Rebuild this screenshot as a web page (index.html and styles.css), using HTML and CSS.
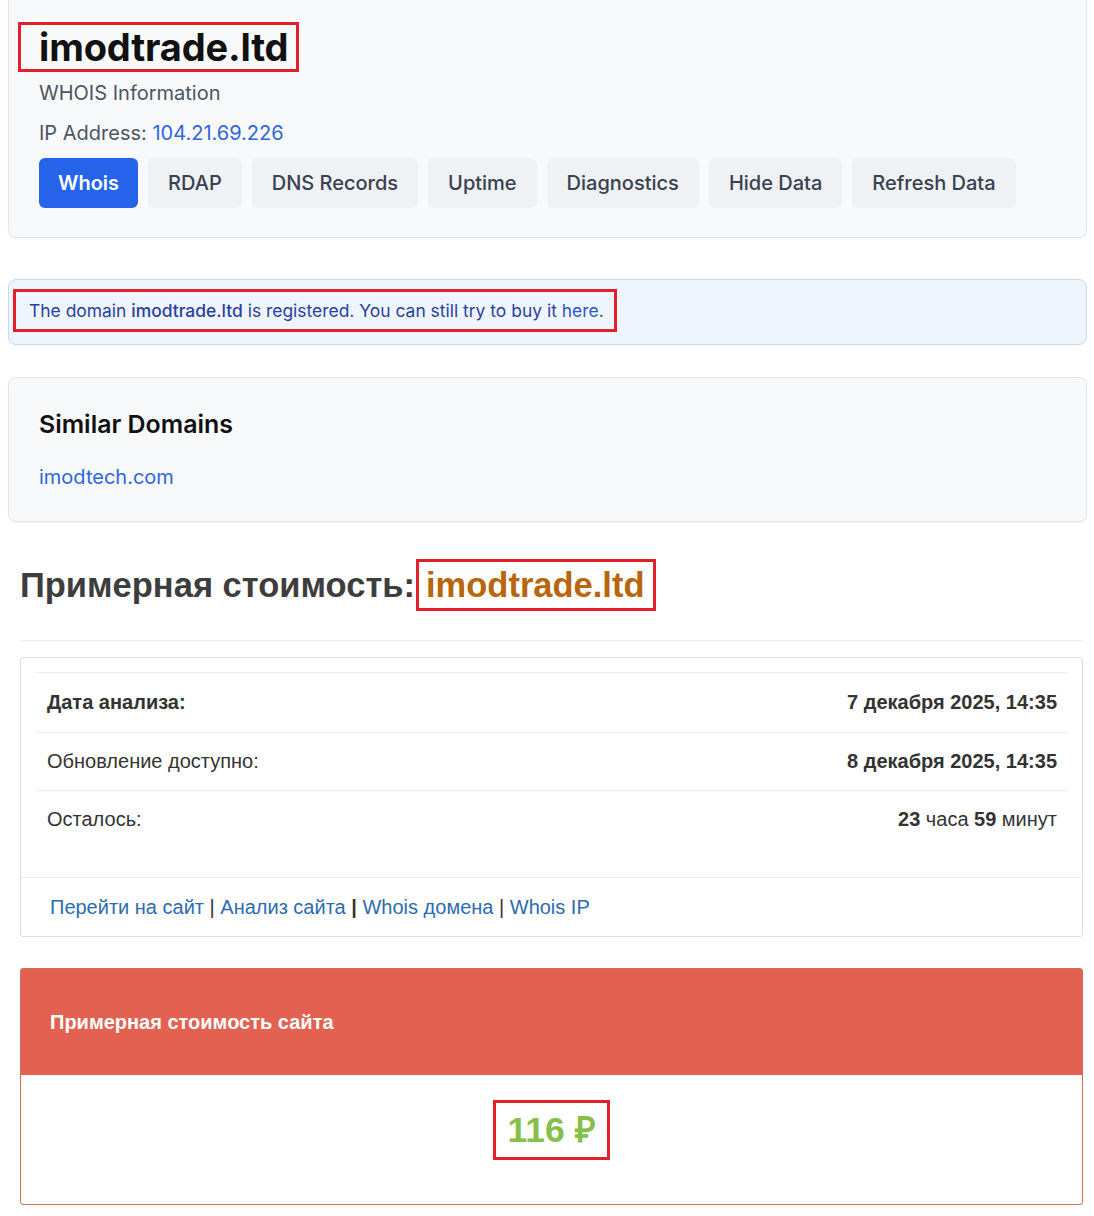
FILE: index.html
```html
<!DOCTYPE html>
<html lang="ru">
<head>
<meta charset="utf-8">
<title>imodtrade.ltd</title>
<link rel="stylesheet" href="styles.css">
</head>
<body>
<div class="page">
  <section class="card head-card">
    <h1 class="domain-title"><span class="mark mark-title">imodtrade.ltd</span></h1>
    <p class="sub">WHOIS Information</p>
    <p class="ip">IP Address: <a href="#" class="link">104.21.69.226</a></p>
    <nav class="tabs">
      <a href="#" class="tab active">Whois</a>
      <a href="#" class="tab">RDAP</a>
      <a href="#" class="tab">DNS Records</a>
      <a href="#" class="tab">Uptime</a>
      <a href="#" class="tab">Diagnostics</a>
      <a href="#" class="tab">Hide Data</a>
      <a href="#" class="tab">Refresh Data</a>
    </nav>
  </section>

  <div class="alert">
    <span class="mark mark-alert">The domain <strong>imodtrade.ltd</strong> is registered. You can still try to buy it <a href="#" class="alert-link">here</a>.</span>
  </div>

  <section class="card similar">
    <h2 class="similar-title">Similar Domains</h2>
    <a href="#" class="link similar-link">imodtech.com</a>
  </section>

  <div class="lower">
    <h2 class="cost-title">Примерная стоимость:<span class="mark mark-cost">imodtrade.ltd</span></h2>
    <hr class="sep">

    <div class="panel">
      <div class="panel-body">
        <table class="info">
          <tr><td class="b">Дата анализа:</td><td class="r b">7 декабря 2025, 14:35</td></tr>
          <tr><td>Обновление доступно:</td><td class="r b">8 декабря 2025, 14:35</td></tr>
          <tr><td>Осталось:</td><td class="r"><b>23</b> часа <b>59</b> минут</td></tr>
        </table>
      </div>
      <div class="panel-footer">
        <a href="#">Перейти на сайт</a> | <a href="#">Анализ сайта</a> <b>|</b> <a href="#">Whois домена</a> | <a href="#">Whois IP</a>
      </div>
    </div>

    <div class="price-panel">
      <div class="price-head">Примерная стоимость сайта</div>
      <div class="price-body"><span class="mark mark-price">116 ₽</span></div>
    </div>
  </div>
</div>
</body>
</html>
```

FILE: styles.css
```css
html, body {
  margin: 0;
  padding: 0;
  background: #ffffff;
}
body {
  font-family: Inter, "Noto Sans", sans-serif;
  color: #111827;
}
.page {
  padding: 0 7px 0 8px;
}
.card {
  background: #f8f9fb;
  border: 1px solid #e3e5e9;
  border-radius: 8px;
  box-shadow: 0 1px 2px rgba(0,0,0,0.04);
}
.head-card {
  margin-top: -8px;
  padding: 29px 30px 29px 30px;
}
.mark {
  border: 3px solid #e2202b;
  display: inline-block;
}
.domain-title {
  margin: 0;
  font-size: 38px;
  font-weight: 700;
  line-height: 44px;
  color: #111111;
  letter-spacing: -0.15px;
}
.mark-title {
  margin-left: -21px;
  padding: 0 8px 0 18px;
}
.sub {
  margin: 7px 0 0 0;
  font-size: 20px;
  line-height: 28px;
  color: #4b5563;
}
.ip {
  margin: 12px 0 0 0;
  font-size: 20px;
  line-height: 28px;
  color: #4b5563;
}
.link {
  color: #2f66d9;
  text-decoration: none;
}
.tabs {
  display: flex;
  gap: 10px;
  margin-top: 11px;
}
.tab {
  display: block;
  height: 50px;
  line-height: 50px;
  padding: 0 20px;
  border-radius: 6px;
  background: #f0f1f4;
  color: #374151;
  font-size: 20px;
  font-weight: 500;
  text-decoration: none;
}
.tab.active {
  background: #2563eb;
  color: #ffffff;
  font-weight: 600;
  padding: 0 19px;
}
.alert {
  margin-top: 41px;
  background: #eef5ff;
  border: 1px solid #c3daf5;
  border-radius: 8px;
  padding: 9px 4px 12px 4px;
}
.mark-alert {
  padding: 0 10px 0 13px;
  line-height: 37px;
  font-size: 17.45px;
  color: #2b3f9e;
}
.mark-alert strong {
  font-weight: 500;
}
.alert-link {
  color: #2b55c4;
  text-decoration: none;
}
.similar {
  margin-top: 32px;
  padding: 30px 30px 30px 30px;
}
.similar-title {
  margin: 0;
  font-size: 24.9px;
  line-height: 32px;
  font-weight: 600;
  color: #111111;
}
.similar-link {
  display: block;
  margin-top: 23px;
  font-size: 20px;
  line-height: 28px;
}
.lower {
  margin: 0 4px 0 12px;
  font-family: "Liberation Sans", Arial, sans-serif;
  color: #333333;
}
.cost-title {
  margin: 37px 0 0 0;
  font-size: 34.5px;
  line-height: 46px;
  font-weight: 700;
  color: #3d3d3d;
}
.mark-cost {
  color: #b8650c;
  padding: 0 8px 0 7px;
  margin-left: 1px;
}
.sep {
  margin: 29px 0 16px 0;
  border: 0;
  border-top: 1px solid #eeeeee;
}
.panel {
  border: 1px solid #dddddd;
  border-radius: 3px;
  background: #ffffff;
}
.panel-body {
  padding: 14px 14px 29px 14px;
}
.info {
  width: 100%;
  border-collapse: collapse;
  font-size: 20px;
}
.info td {
  border-top: 1px solid #eeeeee;
  padding: 0 11px 0 12px;
  height: 57px;
}
.info tr:first-child td {
  height: 59px;
}
.info .r {
  text-align: right;
}
.info .b, .info b {
  font-weight: 700;
}
.panel-footer {
  border-top: 1px solid #eeeeee;
  padding: 0 29px;
  height: 58px;
  line-height: 58px;
  font-size: 20px;
  color: #333333;
}
.panel-footer a {
  color: #2d6bb0;
  text-decoration: none;
}
.price-panel {
  margin-top: 31px;
  border: 1px solid #d9695a;
  border-radius: 3px;
  background: #ffffff;
}
.price-head {
  background: #e26150;
  color: #ffffff;
  height: 106px;
  line-height: 106px;
  padding: 0 29px;
  font-size: 20px;
  font-weight: 700;
}
.price-body {
  text-align: center;
  padding: 25px 0 44px 0;
}
.mark-price {
  padding: 0 11px;
  line-height: 54px;
  font-size: 35.5px;
  font-weight: 700;
  color: #86bf4a;
}
```
